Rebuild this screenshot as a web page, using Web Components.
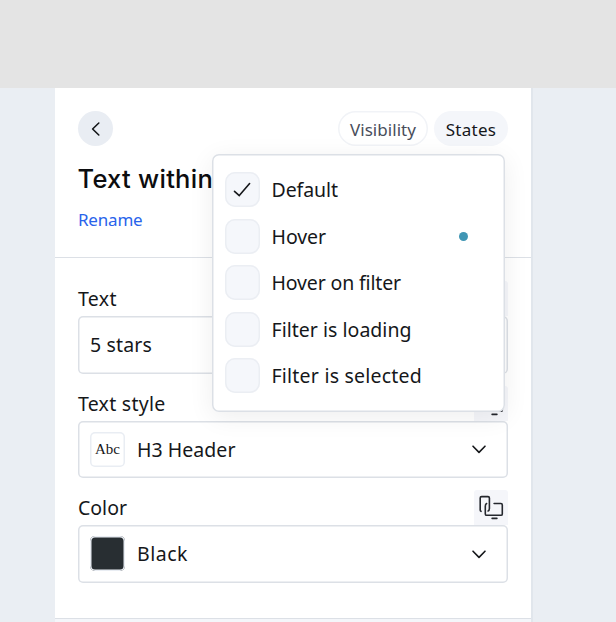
<!DOCTYPE html>
<html lang="en">
<head>
<meta charset="utf-8">
<title>Text within filter</title>
<style>
html,body{margin:0;height:100%;overflow:hidden;background:#eaeef3;font-family:"Noto Sans","Liberation Sans",sans-serif;color:#15171a}
</style>
</head>
<body>
<settings-page></settings-page>
<script>
const define = (name, html, setup) => customElements.define(name, class extends HTMLElement {
  connectedCallback() {
    if (this.shadowRoot) return;
    const t = document.createElement('template');
    t.innerHTML = html;
    this.attachShadow({mode: 'open'}).append(t.content.cloneNode(true));
    if (setup) setup(this, this.shadowRoot);
  }
});

/* Single-line text tracked to an optional measure */
define('tracked-text', `<style>:host{display:inline-block;white-space:nowrap}span{display:inline-block}</style><span><slot></slot></span>`, (el, root) => {
  const s = root.querySelector('span');
  const n = el.textContent.length;
  const w = s.getBoundingClientRect().width;
  if (w) s.style.letterSpacing = ((+el.getAttribute('measure') - w) / n) + 'px';
});

define('chevron-icon', `<style>:host{display:block;width:16px;height:16px}:host([left]){transform:rotate(90deg)}svg{display:block}</style>
<svg width="16" height="16" fill="none" stroke="#15171a" stroke-width="1.6" stroke-linecap="round" stroke-linejoin="round"><path d="M2 5.2 8 11.400l6-6.2"/></svg>`);

define('device-button', `<style>:host{display:block;width:34.5px;height:35px;background:#f5f6fa;border-radius:3px 3px 0 0}svg{display:block}</style>
<svg width="35" height="35" viewBox=".6 .2 35 35" fill="none" stroke="#24272d" stroke-width="1.6" stroke-linecap="round" stroke-linejoin="round"><path d="M7.6 21.5q-.8-.4-.8-1.4V8.2q0-1.4 1.4-1.4h6.4Q16 6.800 16 8.200V18.500q0 2.300-1.300 2.700M20.700 13.700h6.800q1.400 0 1.400 1.400v9q0 1.400-1.400 1.400H13.300q-1.400 0-1.400-1.400v-7.700q0-2 1.300-2.600"/><path d="M18.700 28.600h4.800"/></svg>`);

define('pill-button', `<style>:host{box-sizing:border-box;display:flex;align-items:center;justify-content:center;height:35px;width:90px;border-radius:18px;font-size:17px;color:#484e5b;box-shadow:inset 0 0 0 1.500px #f1f3f7;padding-top:2px}:host([active]){width:74px;background:#f4f6fa;color:#15171a;box-shadow:none}</style><slot></slot>`);

define('page-heading', `<style>
:host{display:block;box-sizing:border-box;height:170px;padding:23px 23px 0 23.500px;border-bottom:1.500px solid #dce0e6}
.bar{display:flex;align-items:center;gap:6px;height:35px}
.back{width:35px;height:35px;border-radius:50%;background:#e9edf3;display:flex;align-items:center;justify-content:center;margin:0 auto 0 -.5px}
h1{margin:14px 0 0 -1px;font:450 25.500px/38px Inter,sans-serif;color:#0c0d0f}
a{display:block;font-size:17px;line-height:24px;color:#2863eb;margin:10px 0 0 -.5px}
</style>
<div class="bar"><div class="back"><chevron-icon left></chevron-icon></div>
<pill-button><tracked-text measure="66">Visibility</tracked-text></pill-button><pill-button active><tracked-text measure="50.5">States</tracked-text></pill-button></div>
<h1><tracked-text measure="135.500">Text within</tracked-text></h1><a><tracked-text measure="64.500">Rename</tracked-text></a>`);

define('form-field', `<style>
:host{display:block}
.label{display:flex;height:35px;justify-content:space-between;align-items:center;font-size:19.5px}
.box{box-sizing:border-box;height:57.500px;border-radius:5px;background:#fff;box-shadow:inset 0 0 0 1.500px #dce0e6;display:flex;align-items:center;padding:0 21px 0 12px;gap:12px;font-size:19.5px}
chevron-icon{margin-left:auto}
</style><div class="label"><slot name="label"></slot><device-button></device-button></div>
<div class="box"><slot name="swatch"></slot><slot></slot></div>`, (el, root) => {
  if (el.hasAttribute('select')) root.querySelector('.box').append(document.createElement('chevron-icon'));
});

define('value-swatch', `<style>:host{box-sizing:border-box;width:35px;height:35px;border-radius:5px;display:flex;align-items:center;justify-content:center;box-shadow:inset 0 0 0 1.500px #e9edf3;font:15px "Liberation Serif",serif}:host([dark]){background:#282e32}</style><slot></slot>`);

define('state-option', `<style>
:host{display:flex;align-items:center;height:35px;gap:12px;font-size:19.5px}
.check{width:35px;height:35px;border-radius:10px;background:#f5f7fb;box-shadow:inset 0 0 0 1.500px #ebeef3}
svg{display:none}:host([checked]) svg{display:block}
i{display:none;width:9px;height:9px;border-radius:50%;background:#4096b4;margin:0 25px 0 auto}:host([changed]) i{display:block}
</style><div class="check"><svg width="35" height="35" fill="none" stroke="#15171a" stroke-width="1.600" stroke-linecap="round" stroke-linejoin="round"><path d="m9.500 19.300 4.800 4.300 10.300-12"/></svg></div><slot></slot><i></i>`);

define('state-menu', `<style>:host{box-sizing:border-box;display:flex;flex-direction:column;gap:11.500px;width:293px;height:258px;padding:18.500px 12.500px;background:#fff;border-radius:7px;box-shadow:inset 0 0 0 1.500px #dce0e6,0 5px 26px #00000012}</style><slot></slot>`);

define('settings-page', `<style>
:host{display:block;position:relative;height:622px;overflow:hidden}
.top{height:88px;background:#e4e4e4}
main{box-sizing:border-box;width:478px;height:534px;margin-left:55px;background:#fff;border-right:2px solid #e1e6ec}
.fields{box-sizing:border-box;height:361px;padding:23px 23px 0 23px;display:flex;flex-direction:column;gap:12px;border-bottom:1.500px solid #dce0e6}
.next{height:3px;background:#f4f6fa}
state-menu{position:absolute;left:212px;top:153.500px}
</style>
<div class="top"></div>
<main><page-heading></page-heading>
<div class="fields">
<form-field><tracked-text slot="label" measure="39">Text</tracked-text><tracked-text measure="62">5 stars</tracked-text></form-field>
<form-field select><tracked-text slot="label" measure="87.5">Text style</tracked-text><value-swatch slot="swatch">Abc</value-swatch><tracked-text measure="98.500">H3 Header</tracked-text></form-field>
<form-field select><tracked-text slot="label" measure="49">Color</tracked-text><value-swatch slot="swatch" dark></value-swatch><tracked-text measure="51">Black</tracked-text></form-field>
</div><div class="next"></div></main>
<state-menu>
<state-option checked><tracked-text measure="66.500">Default</tracked-text></state-option>
<state-option changed><tracked-text measure="54.500">Hover</tracked-text></state-option>
<state-option><tracked-text measure="129.500">Hover on filter</tracked-text></state-option>
<state-option><tracked-text measure="140">Filter is loading</tracked-text></state-option>
<state-option><tracked-text measure="150.500">Filter is selected</tracked-text></state-option>
</state-menu>`);
</script>
</body>
</html>
